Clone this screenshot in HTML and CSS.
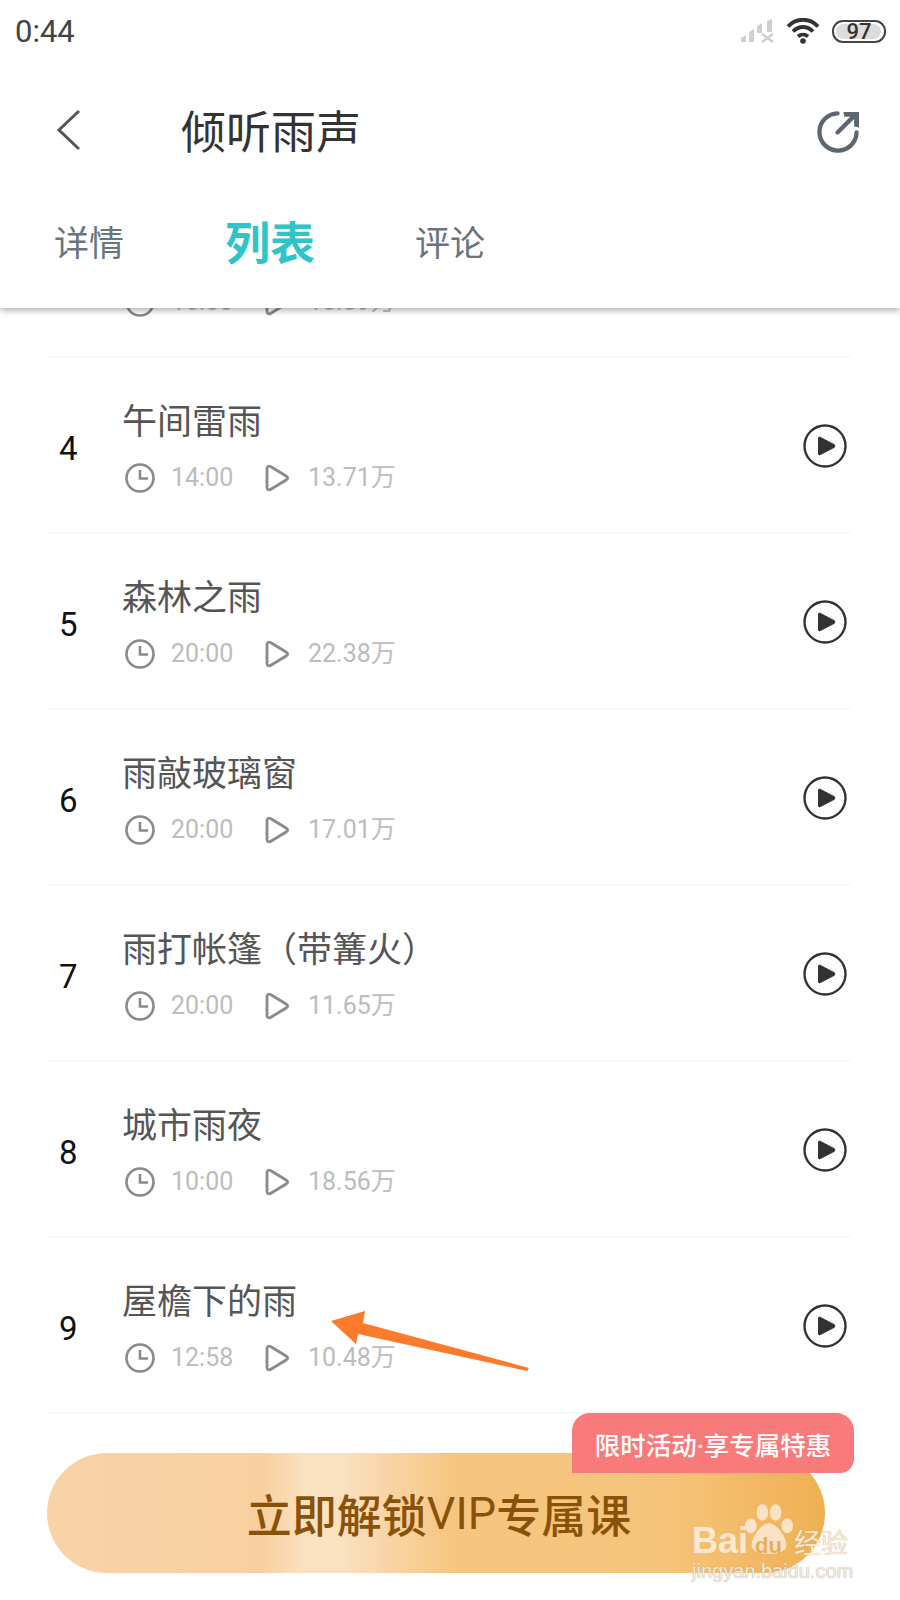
FILE: index.html
```html
<!DOCTYPE html>
<html>
	<head>
		<meta charset="utf-8">
		<title>倾听雨声</title>
		<link rel="stylesheet" href="styles.css">
	</head>

	<body>
		<div id="page">
			<div class="top">
				<div class="status">
					<span class="time">0:44</span>
					<div class="status-icons">
						<svg class="signal" width="34" height="24" viewBox="0 0 34 24">
							<g fill="#cfcfcf">
								<path d="M1 23v-4l5-3v7z"/>
								<path d="M9 23V13l5-3v13z"/>
								<path d="M17 14V7l5-3v10z"/>
								<path d="M27 13V2l5-2v13z"/>
							</g>
							<path d="M22 15l11 8M33 15l-11 8" stroke="#cfcfcf" stroke-width="2.600" fill="none"/>
						</svg>
						<svg class="wifi" width="34" height="26" viewBox="0 0 34 26">
							<g fill="none" stroke="#333" stroke-width="3.800">
								<path d="M2 8.500C10-.5 24-.5 32 8.500"/>
								<path d="M7 13.500c6-6 14-6 20 0"/>
								<path d="M12 18.500c3-2.600 7-2.600 10 0"/>
							</g>
							<circle cx="17" cy="23" r="2.800" fill="#333"/>
						</svg>
						<div class="battery"><div class="battery-level"></div><span>97</span></div>
					</div>
				</div>

				<div class="titlebar">
					<svg class="back" width="26" height="42" viewBox="0 0 26 42">
						<path d="M23 2L3 21l20 19" fill="none" stroke="#555" stroke-width="3"/>
					</svg>
					<h1 class="title">倾听雨声</h1>
					<svg class="share" width="43" height="43" viewBox="0 0 44 44">
						<g fill="none" stroke="#5b6670" stroke-width="4.400" stroke-linecap="round">
							<path d="M21 3.500A19 19 0 1 0 40.500 23"/>
							<path d="M21 23L38 6"/>
						</g>
						<path d="M27 2h16v16l-5-1V7H28z" fill="#5b6670"/>
					</svg>
				</div>

				<div class="tabs">
					<span class="tab">详情</span>
					<span class="tab active">列表</span>
					<span class="tab">评论</span>
				</div>
			</div>

			<div class="list">
				<!-- row mostly hidden behind the header, only its meta line shows -->
				<div class="row">
					<span class="num"></span>
					<div class="info">
						<div class="name"></div>
						<div class="meta">
							<svg class="clock" width="30" height="30" viewBox="0 0 30 30"><circle cx="15" cy="15" r="13.500"/><path d="M15 7v8.500h8"/></svg>
							<span class="dur">15:00</span>
							<svg class="tri" width="26" height="28" viewBox="0 0 26 28"><path d="M3 4.500C3 2.500 5 1.500 6.500 2.500L22.500 12.300C24 13.300 24 14.700 22.500 15.700L6.500 25.500C5 26.500 3 25.500 3 23.500z"/></svg>
							<span class="plays">15.39万</span>
						</div>
					</div>
				</div>
				<div class="row">
					<span class="num">4</span>
					<div class="info">
						<div class="name">午间雷雨</div>
						<div class="meta">
							<svg class="clock" width="30" height="30" viewBox="0 0 30 30"><circle cx="15" cy="15" r="13.500"/><path d="M15 7v8.500h8"/></svg>
							<span class="dur">14:00</span>
							<svg class="tri" width="26" height="28" viewBox="0 0 26 28"><path d="M3 4.500C3 2.500 5 1.500 6.500 2.500L22.500 12.300C24 13.300 24 14.700 22.500 15.700L6.500 25.500C5 26.500 3 25.500 3 23.500z"/></svg>
							<span class="plays">13.71万</span>
						</div>
					</div>
					<svg class="play" width="44" height="44" viewBox="0 0 44 44"><circle cx="22" cy="22" r="20.500"/><path d="M15 14.500c0-1.500 1.200-2 2.500-1.400L31 20c1.800 1 1.800 3 0 4l-13.500 6.900c-1.300.6-2.500.1-2.500-1.400z"/></svg>
				</div>
				<div class="row">
					<span class="num">5</span>
					<div class="info">
						<div class="name">森林之雨</div>
						<div class="meta">
							<svg class="clock" width="30" height="30" viewBox="0 0 30 30"><circle cx="15" cy="15" r="13.500"/><path d="M15 7v8.500h8"/></svg>
							<span class="dur">20:00</span>
							<svg class="tri" width="26" height="28" viewBox="0 0 26 28"><path d="M3 4.500C3 2.500 5 1.500 6.500 2.500L22.500 12.300C24 13.300 24 14.700 22.500 15.700L6.500 25.500C5 26.500 3 25.500 3 23.500z"/></svg>
							<span class="plays">22.38万</span>
						</div>
					</div>
					<svg class="play" width="44" height="44" viewBox="0 0 44 44"><circle cx="22" cy="22" r="20.500"/><path d="M15 14.500c0-1.500 1.200-2 2.500-1.400L31 20c1.800 1 1.800 3 0 4l-13.500 6.900c-1.300.6-2.500.1-2.500-1.400z"/></svg>
				</div>
				<div class="row">
					<span class="num">6</span>
					<div class="info">
						<div class="name">雨敲玻璃窗</div>
						<div class="meta">
							<svg class="clock" width="30" height="30" viewBox="0 0 30 30"><circle cx="15" cy="15" r="13.500"/><path d="M15 7v8.500h8"/></svg>
							<span class="dur">20:00</span>
							<svg class="tri" width="26" height="28" viewBox="0 0 26 28"><path d="M3 4.500C3 2.500 5 1.500 6.500 2.500L22.500 12.300C24 13.300 24 14.700 22.500 15.700L6.500 25.500C5 26.500 3 25.500 3 23.500z"/></svg>
							<span class="plays">17.01万</span>
						</div>
					</div>
					<svg class="play" width="44" height="44" viewBox="0 0 44 44"><circle cx="22" cy="22" r="20.500"/><path d="M15 14.500c0-1.500 1.200-2 2.500-1.400L31 20c1.800 1 1.800 3 0 4l-13.500 6.900c-1.300.6-2.500.1-2.500-1.400z"/></svg>
				</div>
				<div class="row">
					<span class="num">7</span>
					<div class="info">
						<div class="name">雨打帐篷<span class="paren">（</span>带篝火<span class="paren">）</span></div>
						<div class="meta">
							<svg class="clock" width="30" height="30" viewBox="0 0 30 30"><circle cx="15" cy="15" r="13.500"/><path d="M15 7v8.500h8"/></svg>
							<span class="dur">20:00</span>
							<svg class="tri" width="26" height="28" viewBox="0 0 26 28"><path d="M3 4.500C3 2.500 5 1.500 6.500 2.500L22.500 12.300C24 13.300 24 14.700 22.500 15.700L6.500 25.500C5 26.500 3 25.500 3 23.500z"/></svg>
							<span class="plays">11.65万</span>
						</div>
					</div>
					<svg class="play" width="44" height="44" viewBox="0 0 44 44"><circle cx="22" cy="22" r="20.500"/><path d="M15 14.500c0-1.500 1.200-2 2.500-1.400L31 20c1.800 1 1.800 3 0 4l-13.500 6.900c-1.300.6-2.500.1-2.500-1.400z"/></svg>
				</div>
				<div class="row">
					<span class="num">8</span>
					<div class="info">
						<div class="name">城市雨夜</div>
						<div class="meta">
							<svg class="clock" width="30" height="30" viewBox="0 0 30 30"><circle cx="15" cy="15" r="13.500"/><path d="M15 7v8.500h8"/></svg>
							<span class="dur">10:00</span>
							<svg class="tri" width="26" height="28" viewBox="0 0 26 28"><path d="M3 4.500C3 2.500 5 1.500 6.500 2.500L22.500 12.300C24 13.300 24 14.700 22.500 15.700L6.500 25.500C5 26.500 3 25.500 3 23.500z"/></svg>
							<span class="plays">18.56万</span>
						</div>
					</div>
					<svg class="play" width="44" height="44" viewBox="0 0 44 44"><circle cx="22" cy="22" r="20.500"/><path d="M15 14.500c0-1.500 1.200-2 2.500-1.400L31 20c1.800 1 1.800 3 0 4l-13.500 6.900c-1.300.6-2.500.1-2.500-1.400z"/></svg>
				</div>
				<div class="row">
					<span class="num">9</span>
					<div class="info">
						<div class="name">屋檐下的雨</div>
						<div class="meta">
							<svg class="clock" width="30" height="30" viewBox="0 0 30 30"><circle cx="15" cy="15" r="13.500"/><path d="M15 7v8.500h8"/></svg>
							<span class="dur">12:58</span>
							<svg class="tri" width="26" height="28" viewBox="0 0 26 28"><path d="M3 4.500C3 2.500 5 1.500 6.500 2.500L22.500 12.300C24 13.300 24 14.700 22.500 15.700L6.500 25.500C5 26.500 3 25.500 3 23.500z"/></svg>
							<span class="plays">10.48万</span>
						</div>
					</div>
					<svg class="play" width="44" height="44" viewBox="0 0 44 44"><circle cx="22" cy="22" r="20.500"/><path d="M15 14.500c0-1.500 1.200-2 2.500-1.400L31 20c1.800 1 1.800 3 0 4l-13.500 6.900c-1.300.6-2.500.1-2.500-1.400z"/></svg>
				</div>
			</div>

			<div class="bottom">
				<div class="cta">立即解锁<span class="vip">VIP</span>专属课</div>
				<div class="badge">限时活动·享专属特惠</div>
			</div>

			<!-- orange arrow drawn on top of the screenshot -->
			<svg class="arrow" width="210" height="70" viewBox="0 0 210 70">
				<path d="M0 11L34 1 32 13 198 58 196 61 27 24 25 34z" fill="#fb7a2c"/>
			</svg>

			<div class="watermark">
				<svg class="paw" width="48" height="52" viewBox="0 0 58 62">
					<g fill="#fbe8d0" fill-opacity=".9">
						<ellipse cx="21" cy="11" rx="7" ry="10"/>
						<ellipse cx="37" cy="11" rx="7" ry="10"/>
						<ellipse cx="7" cy="27" rx="7" ry="9"/>
						<ellipse cx="51" cy="27" rx="7" ry="9"/>
						<path d="M29 24c9 0 21 16 21 26 0 8-8 11-21 11S8 58 8 50c0-10 12-26 21-26z"/>
					</g>
				</svg>
				<div class="wm-main"><span class="wm-bai">Bai</span><span class="wm-du">du</span><span class="wm-cn">经验</span></div>
				<div class="wm-url">jingyan.baidu.com</div>
			</div>
		</div>
	</body>
</html>
```

FILE: styles.css
```css
html, body {
	height: 100%;
}

body {
	margin: 0;
	background: #fff;
	font-family: Roboto, "Noto Sans CJK SC", sans-serif;
}

#page {
	width: 900px;
	height: 1600px;
	display: flex;
	flex-direction: column;
	position: relative;
	overflow: hidden;
	background: #fff;
}

/* header block */
.top {
	height: 308px;
	flex: none;
	background: #fff;
	box-shadow: 0 2px 7px #00000059;
	position: relative;
	z-index: 2;
}

.status {
	height: 62px;
	padding: 0 14px 0 15px;
	display: flex;
	justify-content: space-between;
	align-items: center;
}

.time {
	font-size: 31px;
	color: #444;
}

.status-icons {
	display: flex;
	align-items: center;
	gap: 12px;
}

.battery {
	width: 50px;
	height: 19px;
	border: 2.5px solid #444;
	border-radius: 11px;
	position: relative;
	display: flex;
	align-items: center;
	justify-content: center;
}
.battery-level {
	position: absolute;
	left: 2px;
	top: 2px;
	bottom: 2px;
	right: 3px;
	background: #dcdcdc;
	border-radius: 8px;
}
.battery span {
	position: relative;
	font-size: 22px;
	font-weight: 500;
	color: #333;
	line-height: 19px;
}

.titlebar {
	height: 131px;
	margin-top: 2px;
	padding: 0 40px 0 56px;
	display: flex;
	align-items: center;
}

.title {
	margin: 0 0 0 99px;
	flex: 1;
	font-size: 45px;
	font-weight: 400;
	color: #333;
}

.share {
	margin-top: 3px;
}

.tabs {
	padding-left: 54px;
	display: flex;
	align-items: center;
	height: 80px;
	margin-top: 5px;
}

.tab {
	width: 70px;
	font-size: 35px;
	color: #66757f;
	white-space: nowrap;
}

.tab.active {
	width: 90px;
	margin: 0 100px 0 101px;
	font-size: 45px;
	font-weight: 700;
	color: #2fc4c8;
}

/* list, bottom-aligned so the first row is cut by the header */
.list {
	flex: none;
	height: 1105px;
	padding: 0 49px;
	display: flex;
	flex-direction: column;
	justify-content: flex-end;
	overflow: hidden;
}

.row {
	flex: none;
	height: 171px;
	padding-top: 4px;
	display: flex;
	align-items: center;
	border-bottom: 1px solid #f2f2f2;
}

.num {
	width: 74px;
	flex: none;
	margin-top: 3px;
	padding-left: 10px;
	box-sizing: border-box;
	font-size: 33px;
	color: #111;
}

.info {
	flex: 1;
	margin-top: -1px;
}

.name {
	height: 46px;
	margin-left: -1px;
	font-size: 35px;
	line-height: 46px;
	color: #555;
	white-space: nowrap;
}

.paren {
	font-family: "Noto Sans CJK TC", sans-serif;
	line-height: 1;
}

.meta {
	margin-top: 17px;
	display: flex;
	align-items: center;
	height: 30px;
	line-height: 30px;
	font-size: 25px;
	color: #bcbcbc;
}

.clock {
	margin-left: 2px;
	fill: none;
	stroke: #8a8a8a;
	stroke-width: 2.6;
}

.dur {
	width: 93px;
	margin-left: 16px;
}

.tri {
	fill: none;
	stroke: #8a8a8a;
	stroke-width: 2.8;
}

.plays {
	margin-left: 18px;
}

.play {
	flex: none;
	margin: -2px 4px 0 0;
}
.play circle {
	fill: none;
	stroke: #333;
	stroke-width: 2.4;
}
.play path {
	fill: #333;
}

/* bottom button */
.bottom {
	flex: 1;
	padding: 40px 0 0 47px;
	position: relative;
}

.cta {
	width: 778px;
	height: 120px;
	box-sizing: border-box;
	padding-left: 6px;
	border-radius: 60px;
	display: flex;
	align-items: center;
	justify-content: center;
	font-size: 45px;
	font-weight: 500;
	color: #8a5208;
	background: linear-gradient(90deg, #f8d3a8 0%, #f8d0a0 28%, #fae1c0 33%, #fae1c0 38%, #f8d6aa 43%, #f6c681 52%, #f5c47a 80%, #efb052 100%);
}

.vip {
	font-weight: 400;
}

.badge {
	position: absolute;
	left: 572px;
	top: 0;
	width: 282px;
	height: 60px;
	box-sizing: border-box;
	border-radius: 18px 18px 14px 0;
	background: #f97a7a;
	display: flex;
	align-items: center;
	justify-content: center;
	font-size: 25.500px;
	font-weight: 500;
	color: #fff;
}

.arrow {
	position: absolute;
	left: 331px;
	top: 1310px;
	z-index: 3;
}

.watermark {
	position: absolute;
	left: 690px;
	top: 1500px;
	width: 200px;
	height: 100px;
	z-index: 3;
}
.paw {
	position: absolute;
	left: 55px;
	top: 3px;
}
.wm-main {
	position: absolute;
	left: 2px;
	top: 20px;
	display: flex;
	align-items: baseline;
	white-space: nowrap;
	color: #fbe8d0;
}
.wm-bai {
	font-family: "Liberation Sans", sans-serif;
	font-size: 36px;
	font-weight: 700;
	width: 55px;
}
.wm-du {
	font-family: "Liberation Sans", sans-serif;
	font-size: 22px;
	font-weight: 700;
	color: #e8ad5c;
	width: 47px;
	padding-left: 8px;
	box-sizing: border-box;
}
.wm-cn {
	font-size: 27px;
	color: #fbe8d0;
	text-shadow: 0 0 1px #aaa;
}
.wm-url {
	position: absolute;
	left: 2px;
	top: 60px;
	font-family: "Liberation Sans", sans-serif;
	font-size: 20px;
	color: #f5e9da;
	text-shadow: 0 0 1px #999;
	white-space: nowrap;
}
```
